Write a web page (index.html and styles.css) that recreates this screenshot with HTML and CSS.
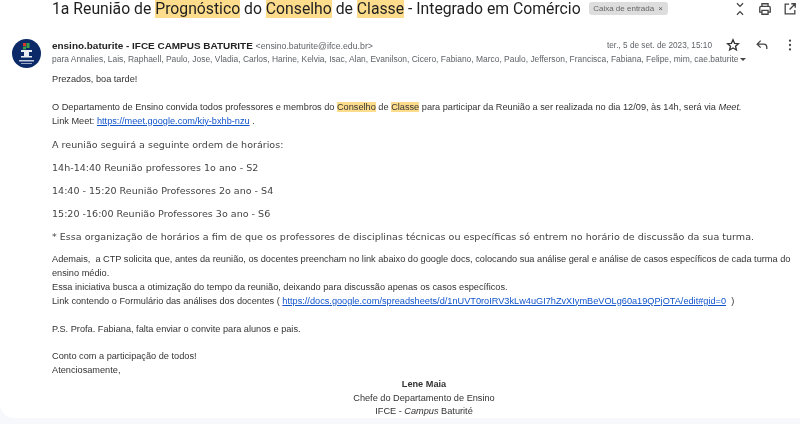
FILE: index.html
```html
<!DOCTYPE html>
<html lang="pt">
<head>
<meta charset="utf-8">
<title>1a Reunião de Prognóstico do Conselho de Classe</title>
<link rel="stylesheet" href="styles.css">
</head>
<body>
<main class="card">
  <header class="subject">
    <h1 class="title">1a Reunião de <mark>Prognóstico</mark> do <mark>Conselho</mark> de <mark>Classe</mark> - Integrado em Comércio</h1>
    <span class="chip">Caixa de entrada <span class="chip-x">×</span></span>
    <div class="top-icons">
      <svg class="ic" viewBox="0 0 16 16"><path d="M4.500 1.500 8 5l3.500-3.500M4.500 14.500 8 11l3.500 3.500"/></svg>
      <svg class="ic" viewBox="0 0 16 16"><path d="M4.500 5V2h7v3M4.500 11.500H2V6.500q0-1.500 1.500-1.500h9q1.500 0 1.500 1.500v5h-2.500M4.500 9.500h7V14h-7z"/></svg>
      <svg class="ic" viewBox="0 0 16 16"><path d="M7 2.500H2.500v11h11V9M9.500 2H14v4.500M14 2 7.500 8.500"/></svg>
    </div>
  </header>
  <section class="head">
    <svg class="avatar" viewBox="0 0 29 29">
      <circle cx="14.500" cy="14.500" r="14.500" fill="#0c2a68"/>
      <rect x="11" y="4" width="3" height="3" fill="#d8362a"/>
      <rect x="14.500" y="4" width="3" height="5" fill="#3ea04a"/>
      <rect x="11" y="7.500" width="3" height="3" fill="#3ea04a"/>
      <path d="M9 11h11v2h-3v4h3v1.500H9V17h3v-4H9z" fill="#e8ecf4"/>
      <rect x="7" y="21" width="15" height="1.500" fill="#c4cde0"/>
      <rect x="9" y="24" width="11" height="1" fill="#9aa8c8"/>
    </svg>
    <div class="meta">
      <div class="from-row">
        <span class="from"><b>ensino.baturite - IFCE CAMPUS BATURITE</b> <span class="addr">&lt;ensino.baturite@ifce.edu.br&gt;</span></span>
        <span class="date">ter., 5 de set. de 2023, 15:10</span>
        <div class="row-icons">
          <svg class="ic star" viewBox="0 0 16 16"><path d="m8 2 1.800 4.100 4.400.4-3.300 2.900 1 4.300L8 11.400l-3.900 2.300 1-4.300-3.300-2.900 4.400-.4z"/></svg>
          <svg class="ic" viewBox="0 0 16 16"><path d="M6.500 3 2.500 7l4 4M2.500 7H10q3.500 0 3.500 4v1.500"/></svg>
          <svg class="ic dots" viewBox="0 0 16 16"><circle cx="8" cy="3" r="1.300"/><circle cx="8" cy="8" r="1.300"/><circle cx="8" cy="13" r="1.300"/></svg>
        </div>
      </div>
      <div class="to-row"><span class="to">para Annalies, Lais, Raphaell, Paulo, Jose, Vladia, Carlos, Harine, Kelvia, Isac, Alan, Evanilson, Cicero, Fabiano, Marco, Paulo, Jefferson, Francisca, Fabiana, Felipe, mim, cae.baturite</span><span class="caret"></span></div>
    </div>
  </section>
  <article class="body">
    <p class="first">Prezados, boa tarde!</p>
    <p>O Departamento de Ensino convida todos professores e membros do <mark>Conselho</mark> de <mark>Classe</mark> para participar da Reunião a ser realizada no dia 12/09, às 14h, será via <i>Meet.</i><br>Link Meet: <a href="#">https://meet.google.com/kiy-bxhb-nzu</a> .</p>
    <div class="sched">
      <p>A reunião seguirá a seguinte ordem de horários:</p>
      <p>14h-14:40 Reunião professores 1o ano - S2</p>
      <p>14:40 - 15:20 Reunião Professores 2o ano - S4</p>
      <p>15:20 -16:00 Reunião Professores 3o ano - S6</p>
      <p>* Essa organização de horários a fim de que os professores de disciplinas técnicas ou específicas só entrem no horário de discussão da sua turma.</p>
    </div>
    <p>Ademais, &nbsp;a CTP solicita que, antes da reunião, os docentes preencham no link abaixo do google docs, colocando sua análise geral e análise de casos específicos de cada turma do ensino médio.<br>Essa iniciativa busca a otimização do tempo da reunião, deixando para discussão apenas os casos específicos.<br>Link contendo o Formulário das análises dos docentes ( <a href="#">https://docs.google.com/spreadsheets/d/1nUVT0roIRV3kLw4uGI7hZvXIymBeVOLg60a19QPjOTA/edit#gid=0</a> &nbsp;)</p>
    <p>P.S. Profa. Fabiana, falta enviar o convite para alunos e pais.</p>
    <p class="closing">Conto com a participação de todos!<br>Atenciosamente,</p>
    <div class="sign"><b>Lene Maia</b><br>Chefe do Departamento de Ensino<br>IFCE - <i>Campus</i> Baturité</div>
  </article>
</main>
</body>
</html>
```
FILE: styles.css
```css
html, body { margin: 0; padding: 0; }
body {
  width: 800px;
  height: 424px;
  overflow: hidden;
  background: #f6f8fc;
  font-family: "Liberation Sans", Arial, sans-serif;
  color: #222;
}
.card {
  height: 418px;
  background: #fff;
  border-radius: 0 0 0 14px;
  overflow: hidden;
  box-sizing: border-box;
  padding-left: 1px;
  filter: blur(0.4px);
}
mark { background: #fddc8c; color: inherit; }
.subject {
  display: flex;
  align-items: center;
  height: 17px;
  padding-left: 51px;
}
.title {
  margin: 0;
  font: 400 15.750px/18px Roboto, "Liberation Sans", sans-serif;
  color: #1f1f1f;
  white-space: nowrap;
}
.chip {
  margin-left: 8px;
  background: #dddddd;
  color: #666;
  border-radius: 3px;
  font-size: 8px;
  line-height: 13px;
  padding: 0 4.500px;
  white-space: nowrap;
}
.chip-x { color: #555; margin-left: 2px; }
.top-icons {
  margin-left: auto;
  display: flex;
  gap: 11px;
  padding-right: 3.500px;
}
.ic {
  width: 14px;
  height: 14px;
  fill: none;
  stroke: #444;
  stroke-width: 1.500;
}
.head {
  display: flex;
  margin-top: 21px;
  padding-left: 11px;
  height: 29px;
}
.avatar { width: 29px; height: 29px; flex: none; margin-top: 1px; }
.meta { margin-left: 11px; flex: 1; min-width: 0; }
.from-row { display: flex; align-items: center; height: 14px; }
.from { font-size: 9.950px; color: #222; white-space: nowrap; flex: 1; }
.addr { font-size: 8.750px; color: #5f6368; }
.date { font-size: 8.250px; color: #5f6368; white-space: nowrap; }
.row-icons { display: flex; gap: 14.500px; margin-left: 14px; padding-right: 3px; }
.star { stroke: #333; }
.dots { fill: #444; stroke: none; }
.to-row { display: flex; align-items: center; height: 14px; margin-top: 0; }
.to { font-size: 8.450px; color: #5f6368; white-space: nowrap; overflow: hidden; width: 686px; }
.caret {
  margin-left: 2px;
  border: 3px solid transparent;
  border-top: 3.500px solid #444;
  border-bottom: 0;
}
.body {
  padding: 6px 0 0 51px;
  font-size: 9.200px;
  line-height: 13.800px;
  color: #333;
}
.body p { margin: 0 0 14px; }
.body p.closing { margin: 0; }
.body a { color: #1155cc; }
.sched {
  font-family: "DejaVu Sans", Verdana, sans-serif;
  font-size: 9.550px;
  line-height: 13.800px;
  margin-top: -4px;
  margin-bottom: 0.500px;
  color: #444;
}
.sched p { margin: 0 0 9.200px; white-space: nowrap; }
.sign { text-align: center; width: 744px; }
```
